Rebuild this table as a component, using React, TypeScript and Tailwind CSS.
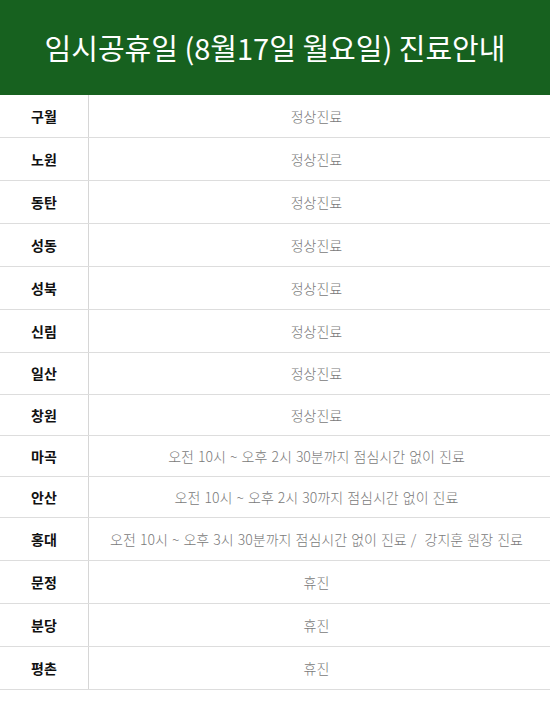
const rows: { name: string; info: string; h: string }[] = [
  { name: "구월", info: "정상진료", h: "h-[43px]" },
  { name: "노원", info: "정상진료", h: "h-[43px]" },
  { name: "동탄", info: "정상진료", h: "h-[43px]" },
  { name: "성동", info: "정상진료", h: "h-[43px]" },
  { name: "성북", info: "정상진료", h: "h-[43px]" },
  { name: "신림", info: "정상진료", h: "h-[43px]" },
  { name: "일산", info: "정상진료", h: "h-[42px]" },
  { name: "창원", info: "정상진료", h: "h-[41px]" },
  { name: "마곡", info: "오전 10시 ~ 오후 2시 30분까지 점심시간 없이 진료", h: "h-[41px]" },
  { name: "안산", info: "오전 10시 ~ 오후 2시 30까지 점심시간 없이 진료", h: "h-[41px]" },
  { name: "홍대", info: "오전 10시 ~ 오후 3시 30분까지 점심시간 없이 진료 /  강지훈 원장 진료", h: "h-[43px]" },
  { name: "문정", info: "휴진", h: "h-[43px]" },
  { name: "분당", info: "휴진", h: "h-[43px]" },
  { name: "평촌", info: "휴진", h: "h-[43px]" },
];

export default function App() {
  return (
    <div className="h-[720px] w-[550px] bg-white font-['Noto_Sans_CJK_KR',sans-serif]">
      <div className="flex h-[95px] items-center justify-center bg-[#17611f]">
        <h1 className="text-[29px] font-normal text-white">
          임시공휴일 (8월17일 월요일) 진료안내
        </h1>
      </div>
      <div>
        {rows.map((row) => (
          <div
            key={row.name}
            className={`flex border-b border-[#dddddd] ${row.h}`}
          >
            <div className="flex w-[89px] shrink-0 items-center justify-center border-r border-[#d6d6d6] text-[14px] font-bold text-[#111111]">
              {row.name}
            </div>
            <div className="flex flex-1 items-center justify-center whitespace-pre pr-[6px] text-[14px] font-light [word-spacing:1px] text-[#7a7a7a]">
              {row.info}
            </div>
          </div>
        ))}
      </div>
    </div>
  );
}
